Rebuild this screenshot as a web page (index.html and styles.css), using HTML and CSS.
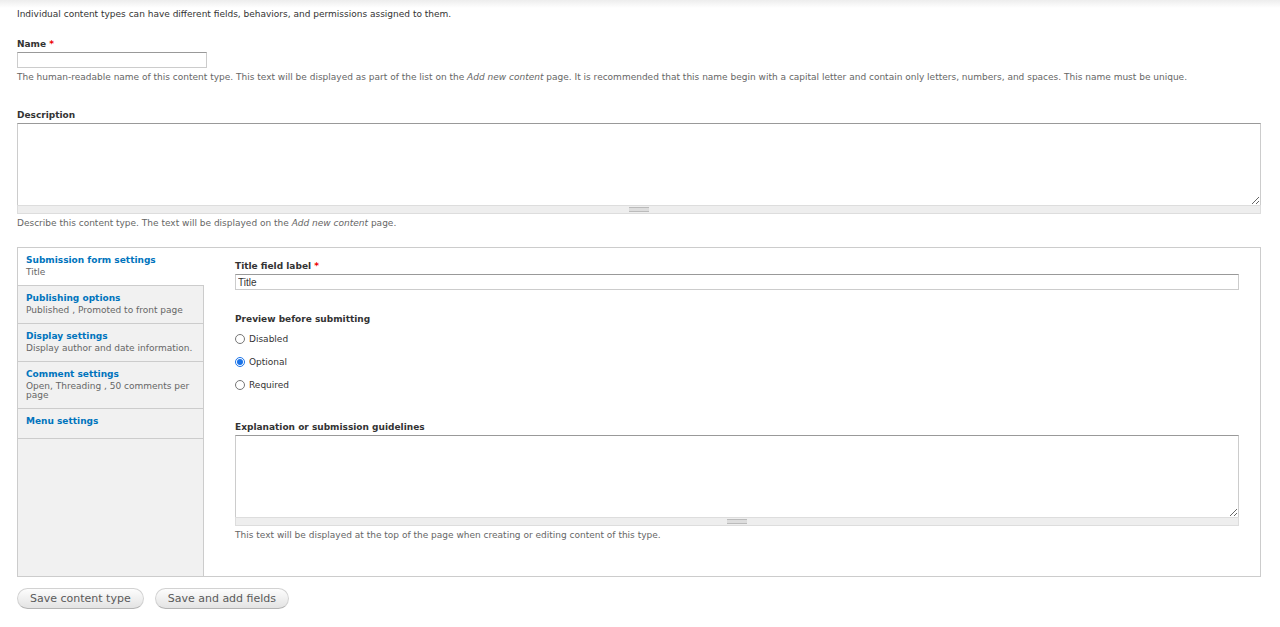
FILE: index.html
```html
<!DOCTYPE html>
<html lang="en">
<head>
<meta charset="UTF-8">
<title>Add content type</title>
<link rel="stylesheet" href="styles.css">
</head>
<body>

<div class="topshade"></div>

<div class="page">
    <p class="intro">Individual content types can have different fields, behaviors, and permissions assigned to them.</p>

    <div class="form-item">
        <label class="field-label" for="name">Name <span class="req">*</span></label>
        <input type="text" id="name" class="text-input name-input">
        <div class="desc">The human-readable name of this content type. This text will be displayed as part of the list on the <em>Add new content</em> page. It is recommended that this name begin with a capital letter and contain only letters, numbers, and spaces. This name must be unique.</div>
    </div>

    <div class="form-item desc-item">
        <label class="field-label" for="description">Description</label>
        <div class="resizable">
            <textarea id="description" class="area"></textarea>
            <div class="grippie"><span></span></div>
        </div>
        <div class="desc">Describe this content type. The text will be displayed on the <em>Add new content</em> page.</div>
    </div>

    <div class="vtabs">
        <ul class="tab-list">
            <li class="tab active">
                <a href="#">Submission form settings</a>
                <span class="summary">Title</span>
            </li>
            <li class="tab">
                <a href="#">Publishing options</a>
                <span class="summary">Published , Promoted to front page</span>
            </li>
            <li class="tab">
                <a href="#">Display settings</a>
                <span class="summary">Display author and date information.</span>
            </li>
            <li class="tab">
                <a href="#">Comment settings</a>
                <span class="summary">Open, Threading , 50 comments per page</span>
            </li>
            <li class="tab tab-plain">
                <a href="#">Menu settings</a>
            </li>
        </ul>

        <div class="pane">
            <div class="form-item">
                <label class="field-label" for="title_label">Title field label <span class="req">*</span></label>
                <input type="text" id="title_label" class="text-input wide-input" value="Title">
            </div>

            <div class="form-item preview-item">
                <div class="field-label">Preview before submitting</div>
                <label class="radio"><input type="radio" name="preview"> Disabled</label>
                <label class="radio"><input type="radio" name="preview" checked> Optional</label>
                <label class="radio"><input type="radio" name="preview"> Required</label>
            </div>

            <div class="form-item help-item">
                <label class="field-label" for="help">Explanation or submission guidelines</label>
                <div class="resizable">
                    <textarea id="help" class="area"></textarea>
                    <div class="grippie"><span></span></div>
                </div>
                <div class="desc">This text will be displayed at the top of the page when creating or editing content of this type.</div>
            </div>
        </div>
    </div>

    <div class="actions">
        <button type="button" class="btn">Save content type</button>
        <button type="button" class="btn">Save and add fields</button>
    </div>
</div>

</body>
</html>
```

FILE: styles.css
```css
body {
    margin: 0;
    padding: 0;
    background-color: #fff;
    color: #333;
    font-family: "DejaVu Sans", Verdana, sans-serif;
    font-size: 9px;
    line-height: 12px;
}

.topshade {
    height: 8px;
    background: linear-gradient(#ededed, #fff);
}

.page {
    padding: 0 19px 0 17px;
}

.intro {
    margin: 0;
}

.form-item {
    margin-top: 18px;
}

.desc-item {
    margin-top: 26px;
}

.field-label {
    display: block;
    font-weight: bold;
    margin-bottom: 2px;
}

.req {
    color: #e00;
}

.text-input {
    display: block;
    box-sizing: border-box;
    height: 16px;
    margin: 0;
    padding: 0 2px;
    border: 1px solid #ccc;
    border-top-color: #999;
    font-family: "Liberation Sans", Arial, sans-serif;
    font-size: 10px;
    color: #333;
}

.name-input {
    width: 190px;
}

.wide-input {
    width: 100%;
}

.desc {
    margin-top: 3px;
    color: #666;
}

.resizable {
    display: flex;
    flex-direction: column;
}

.area {
    display: block;
    box-sizing: border-box;
    height: 82px;
    margin: 0;
    border: 1px solid #ccc;
    border-top-color: #999;
    border-bottom: none;
    resize: vertical;
    font-family: inherit;
}

.grippie {
    height: 7px;
    background-color: #eee;
    border: 1px solid #ddd;
    display: flex;
    align-items: center;
    justify-content: center;
}

.grippie span {
    width: 20px;
    height: 3px;
    border-top: 1px solid #bbb;
    border-bottom: 1px solid #bbb;
    background-color: #ddd;
}

/* vertical tabs */
.vtabs {
    display: flex;
    margin-top: 18px;
    border: 1px solid #ccc;
    height: 328px;
}

.tab-list {
    list-style: none;
    margin: 0;
    padding: 0;
    width: 185px;
    flex-shrink: 0;
    background-color: #f1f1f1;
    border-right: 1px solid #ccc;
}

.tab {
    padding: 6px 8px 8px;
    border-bottom: 1px solid #ccc;
}

.tab.active {
    background-color: #fff;
    margin-right: -1px;
}

.tab-plain {
    padding-bottom: 11px;
}

.tab a {
    display: block;
    color: #0074bd;
    font-weight: bold;
    text-decoration: none;
}

.tab .summary {
    display: block;
    margin-top: 2px;
    line-height: 9px;
    color: #666;
}

.pane {
    flex: 1;
    padding: 12px 21px 0 31px;
}

.pane .form-item:first-child {
    margin-top: 0;
}

.preview-item {
    margin-top: 23px;
}

.preview-item .field-label {
    margin-bottom: 8px;
}

.radio {
    display: flex;
    align-items: center;
    height: 12px;
    margin-bottom: 11px;
}

.radio input {
    width: 10px;
    height: 10px;
    margin: 0 4px 0 0;
    accent-color: #1a73e8;
}

.help-item {
    margin-top: 30px;
}

.actions {
    margin-top: 11px;
    display: flex;
    gap: 11px;
}

.btn {
    height: 21px;
    padding: 0 12px;
    border: 1px solid #d2d2d2;
    border-bottom-color: #b4b4b4;
    border-radius: 11px;
    background: linear-gradient(#fdfdfd, #e3e3e3);
    color: #5a5a5a;
    font-family: "DejaVu Sans", Verdana, sans-serif;
    font-size: 11px;
    cursor: pointer;
}
```
